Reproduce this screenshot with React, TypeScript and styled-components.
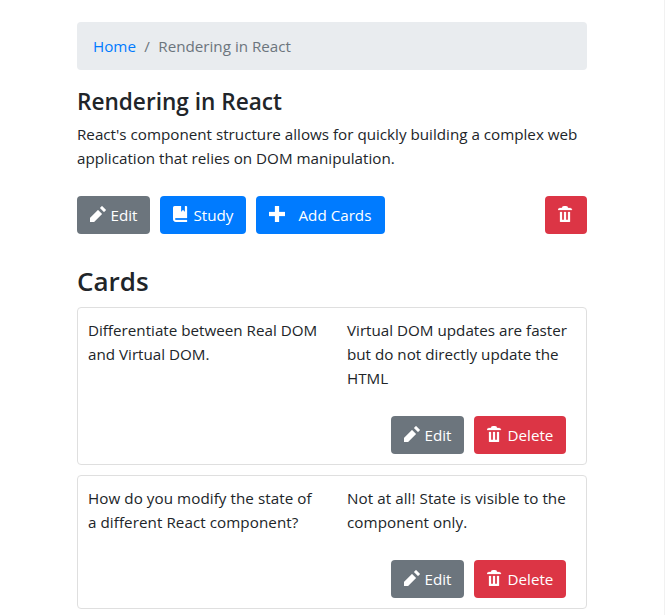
import React from "react";
import styled, { createGlobalStyle } from "styled-components";

const GlobalStyle = createGlobalStyle`
  *, *::before, *::after { box-sizing: border-box; }
  body {
    margin: 0;
    background: #fff;
    color: #212529;
    font: 400 15.2px/24px "Open Sans", "Noto Sans", sans-serif;
    overflow: hidden;
  }
  h3, h4, p { margin: 0; }
`;

const Page = styled.div`
  height: 615px;
  padding: 22px 77px 0;
  border-right: 1px solid #f1f1f1;
  overflow: hidden;
`;

const Container = styled.main`
  width: 510px;
`;

const Breadcrumb = styled.nav`
  display: flex;
  height: 48px;
  padding: 12px 16px;
  background: #e9ecef;
  border-radius: 4px;
  color: #6c757d;
`;

const HomeLink = styled.a`
  color: #007bff;
  text-decoration: none;
`;

const Separator = styled.span`
  padding: 0 8.4px;
`;

const DeckTitle = styled.h4`
  margin-top: 17px;
  font-size: 22.6px;
  line-height: 29px;
  font-weight: 600;
`;

const Description = styled.p`
  margin-top: 6px;
  white-space: nowrap;
`;

const Toolbar = styled.div`
  display: flex;
  gap: 10px;
  margin-top: 26px;
`;

const tones = { secondary: "#6c757d", primary: "#007bff", danger: "#dc3545" };

const Button = styled.button<{
  $tone: keyof typeof tones;
  $width: number;
  $gap?: number;
  $end?: boolean;
}>`
  display: flex;
  align-items: center;
  gap: ${(p) => p.$gap ?? 5}px;
  width: ${(p) => p.$width}px;
  height: 38px;
  margin-left: ${(p) => (p.$end ? "auto" : 0)};
  padding: 0 0 0 12.5px;
  border: 0;
  border-radius: 4px;
  background: ${(p) => tones[p.$tone]};
  color: #fff;
  font: inherit;
  white-space: nowrap;
`;

const Glyph = styled.svg`
  flex: none;
  width: 16px;
  height: 16px;
  margin-bottom: 2px;
  fill: currentColor;
  stroke: currentColor;
  stroke-width: 0.12;
`;

const SectionTitle = styled.h3`
  margin-top: 30px;
  font-size: 26px;
  line-height: 34px;
  font-weight: 600;
`;

const CardList = styled.section`
  display: grid;
  gap: 10px;
  margin-top: 9px;
`;

const Card = styled.article`
  padding: 10px 20px 10px 10px;
  border: 1px solid #dfdfdf;
  border-radius: 4px;
`;

const CardText = styled.div`
  display: grid;
  grid-template-columns: 239px 219px;
  column-gap: 20px;
`;

const Side = styled.p<{ $tracking?: number }>`
  letter-spacing: ${(p) => p.$tracking ?? 0}px;
  white-space: pre;
`;

const CardActions = styled.div`
  display: flex;
  justify-content: flex-end;
  gap: 10px;
  margin-top: 26px;
`;

const paths = {
  pencil: "M6 0l-1 1 2 2 1-1-2-2zm-2 2l-4 4v2h2l4-4-2-2z",
  book: "M1 0c-.07 0-.13.01-.19.03-.39.08-.7.39-.78.78-.03.06-.03.12-.03.19v5.5c0 .83.67 1.5 1.5 1.5h5.5v-1h-5.5c-.28 0-.5-.22-.5-.5s.22-.5.5-.5h5.5v-5.5c0-.28-.22-.5-.5-.5h-.5v3l-1-1-1 1v-3h-3z",
  plus: "M3 0v3h-3v2h3v3h2v-3h3v-2h-3v-3h-2z",
  trash:
    "M3 0c-.55 0-1 .45-1 1h-1c-.55 0-1 .45-1 1h7c0-.55-.45-1-1-1h-1c0-.55-.45-1-1-1h-1zm-2 3v4.81c0 .11.08.19.19.19h4.63c.11 0 .19-.08.19-.19v-4.81h-1v3.5c0 .28-.22.5-.5.5s-.5-.22-.5-.5v-3.5h-1v3.5c0 .28-.22.5-.5.5s-.5-.22-.5-.5v-3.5h-1z",
};

const Icon = ({ name }: { name: keyof typeof paths }) => (
  <Glyph viewBox="0 0 8 8" aria-hidden="true">
    <path d={paths[name]} />
  </Glyph>
);

const EditButton = () => (
  <Button $tone="secondary" $width={73}>
    <Icon name="pencil" />
    Edit
  </Button>
);

const cards = [
  {
    front: "Differentiate between Real DOM\nand Virtual DOM.",
    back: "Virtual DOM updates are faster\nbut do not directly update the\nHTML",
    tracking: 0,
  },
  {
    front: "How do you modify the state of\na different React component?",
    back: "Not at all! State is visible to the\ncomponent only.",
    tracking: 0.06,
  },
];

export default function App() {
  return (
    <Page>
      <GlobalStyle />
      <Container>
        <Breadcrumb>
          <HomeLink href="#">Home</HomeLink>
          <Separator>/</Separator>
          <span>Rendering in React</span>
        </Breadcrumb>
        <DeckTitle>Rendering in React</DeckTitle>
        <Description>
          React's component structure allows for quickly building a complex web
          <br />
          application that relies on DOM manipulation.
        </Description>
        <Toolbar>
          <EditButton />
          <Button $tone="primary" $width={86}>
            <Icon name="book" />
            Study
          </Button>
          <Button $tone="primary" $width={129} $gap={14}>
            <Icon name="plus" />
            Add Cards
          </Button>
          <Button $tone="danger" $width={42} $end aria-label="Delete deck">
            <Icon name="trash" />
          </Button>
        </Toolbar>
        <SectionTitle>Cards</SectionTitle>
        <CardList>
          {cards.map((card) => (
            <Card key={card.front}>
              <CardText>
                <Side $tracking={card.tracking}>{card.front}</Side>
                <Side $tracking={card.tracking}>{card.back}</Side>
              </CardText>
              <CardActions>
                <EditButton />
                <Button $tone="danger" $width={92}>
                  <Icon name="trash" />
                  Delete
                </Button>
              </CardActions>
            </Card>
          ))}
        </CardList>
      </Container>
    </Page>
  );
}
